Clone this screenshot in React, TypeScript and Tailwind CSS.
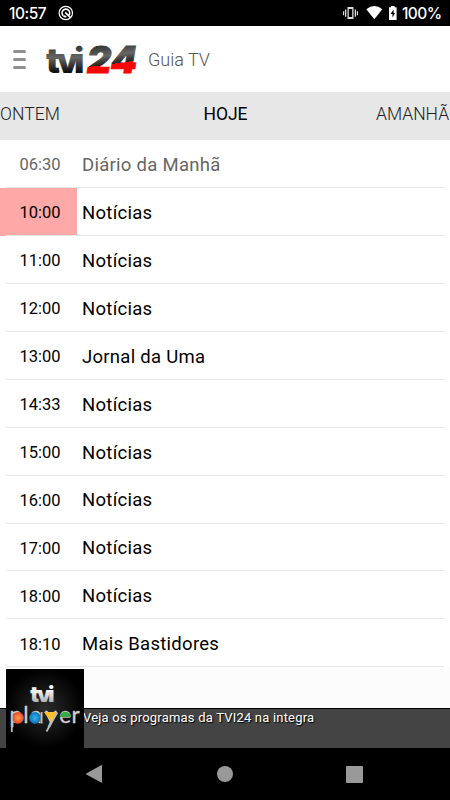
import clsx from "clsx";

type Program = {
  time: string;
  title: string;
  state?: "past" | "live";
};

const PROGRAMS: Program[] = [
  { time: "06:30", title: "Diário da Manhã", state: "past" },
  { time: "10:00", title: "Notícias", state: "live" },
  { time: "11:00", title: "Notícias" },
  { time: "12:00", title: "Notícias" },
  { time: "13:00", title: "Jornal da Uma" },
  { time: "14:33", title: "Notícias" },
  { time: "15:00", title: "Notícias" },
  { time: "16:00", title: "Notícias" },
  { time: "17:00", title: "Notícias" },
  { time: "18:00", title: "Notícias" },
  { time: "18:10", title: "Mais Bastidores" },
];

const StatusBar = () => {
  return (
    <div className="flex h-[26px] shrink-0 items-center bg-black pl-[9px] pr-[9px] font-['Inter',sans-serif] text-[15.5px] font-medium text-white">
      <span className="w-[38px] whitespace-nowrap pt-[2px] tracking-[-0.5px]">
        10:57
      </span>
      <svg className="ml-[11px]" width="16" height="16" viewBox="0 0 16 16" fill="none">
        <circle cx="7.8" cy="8" r="6.7" stroke="#fff" strokeWidth="1.2" />
        <path d="M5.2 10.7A3.8 3.8 0 1 1 10.8 10.4" stroke="#fff" strokeWidth="1.7" />
        <path d="M7.2 7.4 12.2 12.4M5.4 10.6Q6.8 11.9 8.4 11.5" stroke="#fff" strokeWidth="1.7" />
      </svg>
      {/* vibrate, wifi, battery */}
      <svg className="ml-auto" width="55" height="16" viewBox="0 0 55 16">
        <g fill="#ddd">
          <path fillRule="evenodd" d="M4.5 2h6v12h-6zM5.8 4v8h3.4V4z" />
          <path d="M0 6.2h1.2v4H0zM2 4.5h1.3v7.3H2zM11.7 4.5H13v7.3h-1.3zM13.8 6.2H15v4h-1.2z" />
        </g>
        <path d="M23.3 4.2Q31.3-2.2 39.3 4.2L31.3 14.2Z" fill="#fff" />
        <path d="M46 2.2h2V1h3.6v1.2h2V15H46z" fill="#fff" />
        <path d="M50.6 4.4 47.5 9h2v3.6L52.1 8h-1.5z" fill="#000" />
      </svg>
      <span className="ml-[4px] w-[39px] whitespace-nowrap pt-[2px] tracking-[-0.6px]">
        100%
      </span>
    </div>
  );
};

const ChannelLogo = () => {
  return (
    <svg className="ml-[20px]" width="93" height="32" viewBox="0 0 93 32">
      <defs>
        <linearGradient id="steel" gradientUnits="userSpaceOnUse" x1="0" y1="2" x2="0" y2="30">
          <stop offset="0" stopColor="#333" />
          <stop offset="0.45" stopColor="#656565" />
          <stop offset="0.95" stopColor="#111" />
        </linearGradient>
        <linearGradient id="steelRed" gradientUnits="userSpaceOnUse" x1="60" y1="2" x2="63.6" y2="28.8">
          <stop offset="0" stopColor="#333" />
          <stop offset="0.4" stopColor="#666" />
          <stop offset="0.72" stopColor="#222" />
          <stop offset="0.72" stopColor="#f80505" />
        </linearGradient>
      </defs>
      <g fontFamily="Inter, sans-serif" fontWeight="900">
        <text x="0 10.5 28" y="30" fontSize="35" fill="url(#steel)">
          tvi
        </text>
        <text x="41" y="29.5" fontSize="37" fontStyle="italic" textLength="50" lengthAdjust="spacingAndGlyphs" fill="url(#steelRed)" stroke="url(#steelRed)" strokeWidth="1">
          24
        </text>
      </g>
    </svg>
  );
};

const Header = () => {
  return (
    <header className="flex h-[66px] shrink-0 items-center bg-white pl-[13px]">
      <div className="flex w-[13px] flex-col gap-[5px]">
        <span className="h-[3px] rounded-full bg-[#8f8f8f]" />
        <span className="h-[3px] rounded-full bg-[#8f8f8f]" />
        <span className="h-[3px] rounded-full bg-[#8f8f8f]" />
      </div>
      <ChannelLogo />
      <h1 className="ml-[9px] pt-px text-[18px] font-light text-[#555]">
        Guia TV
      </h1>
    </header>
  );
};

const DayTabs = () => {
  return (
    <nav className="flex h-[48px] shrink-0 items-center justify-between bg-[#e7e7e7] pb-[4px] text-[17.5px] font-light text-[#222]">
      <span className="w-[75px] tracking-[0.1px]">ONTEM</span>
      <span className="font-normal text-black">HOJE</span>
      <span className="w-[74px] whitespace-nowrap">AMANHÃ</span>
    </nav>
  );
};

const ProgramRow = ({ time, title, state }: Program) => {
  return (
    <li
      className={clsx(
        "relative flex h-[47.95px] items-center",
        state === "past" ? "text-[#666]" : "text-black",
      )}
    >
      <span
        className={clsx(
          "flex h-full w-[77px] items-center pl-[19.5px] pt-[3.6px] text-[16.5px]",
          state === "live" && "bg-[#ffa8a8]",
        )}
      >
        {time}
      </span>
      <span className="pl-[5px] pt-[3.6px] text-[18.5px] tracking-[0.28px]">
        {title}
      </span>
      <span className="absolute inset-x-[6px] bottom-0 h-px bg-[#e8e8e8]" />
    </li>
  );
};

const PlayerLogo = () => {
  return (
    <svg className="absolute left-[6px] top-[-40px]" width="78" height="79" viewBox="0 0 78 79">
      <defs>
        <radialGradient id="glow">
          <stop offset="0" stopColor="#2b2b2b" />
          <stop offset="1" stopColor="#000" />
        </radialGradient>
        <linearGradient id="silver" x1="0" y1="0" x2="0" y2="1">
          <stop offset="0.3" stopColor="#fff" />
          <stop offset="1" stopColor="#999" />
        </linearGradient>
        <radialGradient id="orange">
          <stop offset="0" stopColor="#ff9b51" />
          <stop offset="1" stopColor="#e74320" />
        </radialGradient>
        <radialGradient id="blue">
          <stop offset="0" stopColor="#36b5ed" />
          <stop offset="1" stopColor="#0873bb" />
        </radialGradient>
      </defs>
      <rect width="78" height="79" fill="url(#glow)" />
      <text x="24.3 31 42" y="32.7" fontFamily="Inter, sans-serif" fontWeight="900" fontSize="22" fill="url(#silver)">
        tvi
      </text>
      <text x="3.5 17.3 24.5 39 53.3 65.5" y="54.3" fontFamily="Lato, sans-serif" fontSize="22.5" fill="#d0d0d0" stroke="#d0d0d0" strokeWidth="0.3">
        player
      </text>
      <circle cx="12" cy="48.8" r="5.9" fill="url(#orange)" />
      <circle cx="29" cy="48.8" r="5.9" fill="url(#blue)" />
      <path d="M38 43h13.5l-6.5 10.5z" fill="#ffc02e" />
      <path d="M53.8 48a5.6 5.2 0 0 1 11.2 0z" fill="#35aa45" />
      <path d="M5.8 43.5v19.5M35.6 43v11.4M51.3 43.5 40.5 62.5" stroke="#bbb" strokeWidth="1.8" fill="none" />
    </svg>
  );
};

const PlayerBanner = () => {
  return (
    <div className="relative h-[40px] shrink-0 border-t border-black bg-[#444]">
      <PlayerLogo />
      <p className="pl-[83px] text-[13px] leading-[17px] tracking-[0.2px] text-white [text-shadow:1px_1px_1px_#000]">
        Veja os programas da TVI24 na integra
      </p>
    </div>
  );
};

const NavigationBar = () => {
  return (
    <div className="flex h-[52px] shrink-0 items-center justify-between bg-black pl-[85px] pr-[87px]">
      <svg width="18" height="18" viewBox="0 0 18 18" fill="#999">
        <path d="M16.5 0Q17 0 17 .8V17.2Q17 18 16.2 17.6L1.3 9.6Q.7 9 1.3 8.4L16 .3z" />
      </svg>
      <span className="size-4 rounded-full bg-[#999]" />
      <span className="size-[17px] rounded-[1px] bg-[#999]" />
    </div>
  );
};

const App = () => {
  return (
    <div className="flex h-[800px] w-[450px] flex-col overflow-hidden bg-[#fcfcfc] font-['Roboto',sans-serif]">
      <StatusBar />
      <Header />
      <DayTabs />
      <ul className="shrink-0 bg-white">
        {PROGRAMS.map((program) => (
          <ProgramRow key={program.time} {...program} />
        ))}
      </ul>
      <div className="grow" />
      <PlayerBanner />
      <NavigationBar />
    </div>
  );
};

export default App;
